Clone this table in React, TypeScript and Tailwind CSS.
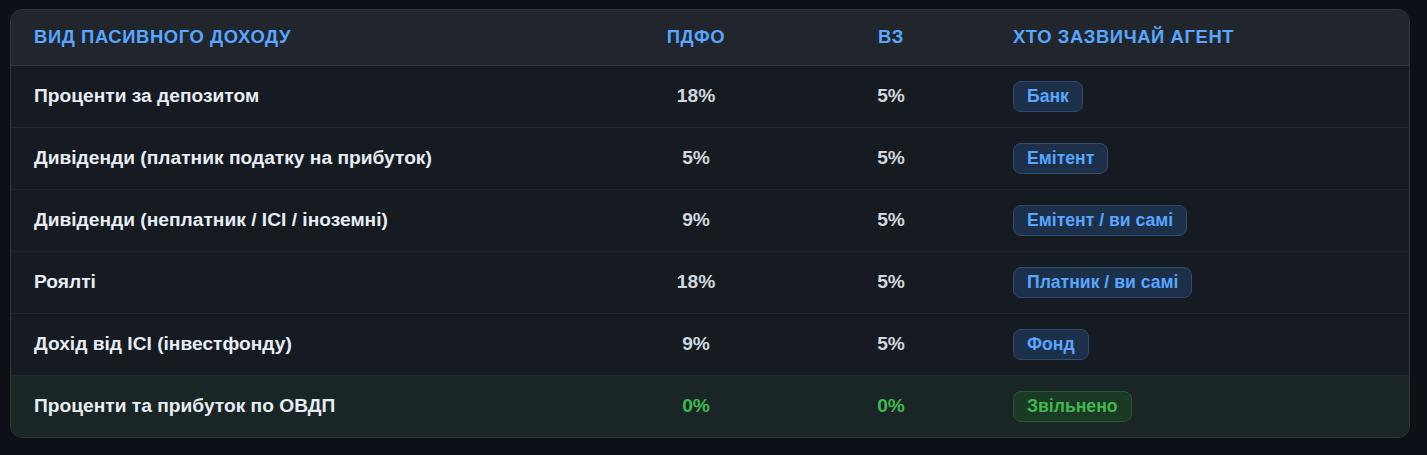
const rows = [
  { name: 'Проценти за депозитом', pdfo: '18%', vz: '5%', agent: 'Банк' },
  { name: 'Дивіденди (платник податку на прибуток)', pdfo: '5%', vz: '5%', agent: 'Емітент' },
  { name: 'Дивіденди (неплатник / ICI / іноземні)', pdfo: '9%', vz: '5%', agent: 'Емітент / ви самі' },
  { name: 'Роялті', pdfo: '18%', vz: '5%', agent: 'Платник / ви самі' },
  { name: 'Дохід від ICI (інвестфонду)', pdfo: '9%', vz: '5%', agent: 'Фонд' },
  { name: 'Проценти та прибуток по ОВДП', pdfo: '0%', vz: '0%', agent: 'Звільнено', exempt: true },
];

export default function App() {
  return (
    <div
      className="min-h-[455px] bg-[#0d1117] pt-[9px] pl-[10px] pr-[17px]"
      style={{ fontFamily: '"Liberation Sans", Arial, sans-serif' }}
    >
      <div className="overflow-hidden rounded-xl border border-[#30363d] bg-[#161b22]">
        <table className="w-full border-collapse table-fixed">
          <colgroup>
            <col className="w-[589px]" />
            <col className="w-[192px]" />
            <col className="w-[198px]" />
            <col />
          </colgroup>
          <thead>
            <tr className="h-[55px] bg-[#21262d] border-b border-[#30363d]">
              <th className="px-[23px] text-left text-[18.4px] font-bold uppercase tracking-[0.6px] text-[#58a6ff]">
                Вид пасивного доходу
              </th>
              <th className="text-center text-[18.4px] font-bold uppercase tracking-[0.6px] text-[#58a6ff]">ПДФО</th>
              <th className="text-center text-[18.4px] font-bold uppercase tracking-[0.6px] text-[#58a6ff]">ВЗ</th>
              <th className="px-[23px] text-left text-[18.4px] font-bold uppercase tracking-[0.6px] text-[#58a6ff]">
                Хто зазвичай агент
              </th>
            </tr>
          </thead>
          <tbody>
            {rows.map((r, i) => (
              <tr
                key={r.name}
                className={`h-[62px] ${i < rows.length - 1 ? 'border-b border-[#21262d]' : ''} ${
                  r.exempt ? 'bg-[#1a2526]' : ''
                }`}
              >
                <td className="px-[23px] text-[19.2px] font-bold text-[#e6edf3]">{r.name}</td>
                <td className={`text-center text-[19.2px] font-bold ${r.exempt ? 'text-[#3fb950]' : 'text-[#d0d7de]'}`}>
                  {r.pdfo}
                </td>
                <td className={`text-center text-[19.2px] font-bold ${r.exempt ? 'text-[#3fb950]' : 'text-[#d0d7de]'}`}>
                  {r.vz}
                </td>
                <td className="px-[23px]">
                  <span
                    className={`inline-flex h-[31px] items-center rounded-lg border px-[13px] text-[17.6px] font-bold ${
                      r.exempt
                        ? 'border-[#245a32] bg-[#1b3a26] text-[#3fb950]'
                        : 'border-[#2f4d70] bg-[#1d3049] text-[#58a6ff]'
                    }`}
                  >
                    {r.agent}
                  </span>
                </td>
              </tr>
            ))}
          </tbody>
        </table>
      </div>
    </div>
  );
}
